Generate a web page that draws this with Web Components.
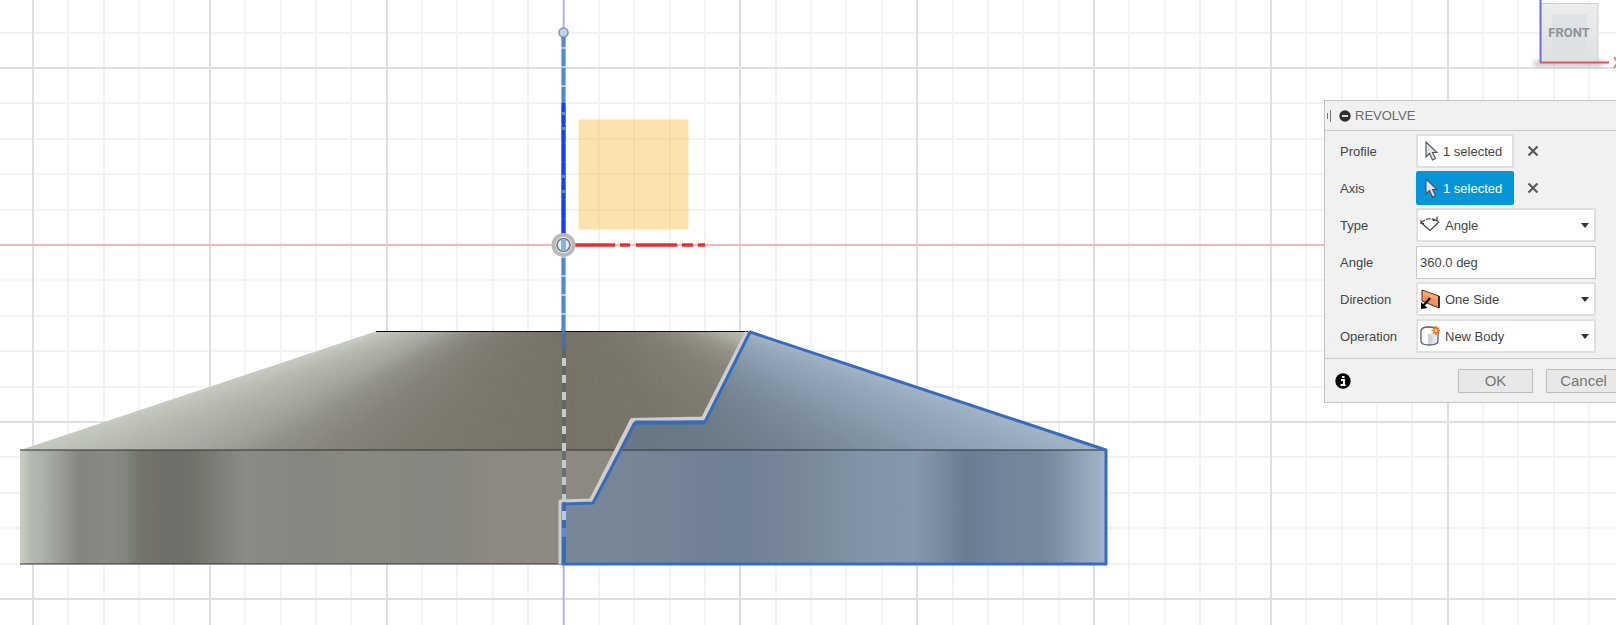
<!DOCTYPE html>
<html lang="en">
<head>
<meta charset="utf-8">
<title>Revolve</title>
<style>
  body { margin: 0; background: #fff; font-family: "Liberation Sans", Arial, sans-serif; }
</style>
</head>
<body>
<cad-workspace>
  <sketch-canvas></sketch-canvas>
  <view-cube slot="cube" face="FRONT"></view-cube>
  <command-panel slot="panel" heading="REVOLVE">
    <pick-field label="Profile" value="1 selected"></pick-field>
    <pick-field label="Axis" value="1 selected" active></pick-field>
    <choice-field label="Type" options="Angle|To|Full">
      <svg width="20" height="20" viewBox="0 0 20 20" fill="none" stroke="#3c4248" stroke-width="1.2">
        <path d="M1.500 8 10 15.500 18 8"/><path d="M1 8Q8 1 16 5.500" stroke-dasharray="5 1"/><path d="M12.500 5.500h4.500V1.500M17 5l2 3M1 5v3.500h3"/>
      </svg>
    </choice-field>
    <value-field label="Angle" value="360.0 deg"></value-field>
    <choice-field label="Direction" options="One Side|Two Sides|Symmetric">
      <svg width="20" height="20" viewBox="0 0 20 20">
        <path d="M2 1 19 7V19L2 12Z" fill="#f0905a" stroke="#5b2d10" stroke-width="1"/>
        <path d="M3 2 18 7.500V11L3 6Z" fill="#f6a872"/>
        <path d="M19 7v12" stroke="#111" stroke-width="1.500"/>
        <path d="M10 9 3 17" stroke="#000" stroke-width="2.200"/>
        <path d="M1 20V13l6.500 6Z" fill="#000"/>
      </svg>
    </choice-field>
    <choice-field label="Operation" options="New Body|Join|Cut|Intersect">
      <svg width="20" height="20" viewBox="0 0 20 20">
        <defs><linearGradient id="b"><stop stop-color="#fff"/><stop offset=".4" stop-color="#fff"/><stop offset=".45" stop-color="#c9ced6"/><stop offset="1" stop-color="#f2f4f6"/></linearGradient></defs>
        <path d="M1 5C1 2 4 1 9 1s9 1 9 4v10c0 3-4 4-9 4s-8-1-8-4Z" fill="url(#b)" stroke="#56606c" stroke-width="1.3"/>
        <ellipse cx="9" cy="5" rx="7" ry="3" fill="#fff"/>
        <path d="M16 0v9M11.500 4.500h9M13 1.500l6 6M19 1.500l-6 6" stroke="#ea7420" stroke-width="1.7"/>
        <circle cx="16" cy="4.500" r="1.300" fill="#fff0d8"/>
      </svg>
    </choice-field>
  </command-panel>
</cad-workspace>

<script>
const define = (name, html, setup) => customElements.define(name, class extends HTMLElement {
  connectedCallback() {
    if (this.shadowRoot) return;
    this.attachShadow({ mode: 'open' }).innerHTML = html;
    if (setup) setup(this, this.shadowRoot);
  }
});

define('cad-workspace', `
  <style>
    :host { display: block; position: relative; min-height: 100vh; overflow: hidden; }
    ::slotted(view-cube) { position: absolute; top: 0; right: 0; }
    ::slotted(command-panel) { position: absolute; top: 100px; right: -16px; }
  </style>
  <slot></slot><slot name="cube"></slot><slot name="panel"></slot>`);

define('sketch-canvas', `
  <style>
    :host { display: block; height: 100vh; }
    svg { display: block; width: 100%; height: 100%; }
  </style>
  <svg viewBox="0 0 1616 625" preserveAspectRatio="xMinYMin slice" role="img" aria-label="Revolved body, front view">
    <defs>
      <linearGradient id="grey" gradientUnits="userSpaceOnUse" x1="20" x2="1106" y1="0" y2="0"></linearGradient>
      <linearGradient id="blue" gradientUnits="userSpaceOnUse" x1="20" x2="1106" y1="0" y2="0"></linearGradient>
      <clipPath id="cone"><path d="M20 450 376 331H750L1106 450Z"/></clipPath>
      <clipPath id="profile"><path d="M563 564V504L593 503 635 423 705 422 750 332 1106 450V564Z"/></clipPath>
    </defs>
    <g id="grid"></g>
    <path d="M0 245H1616" stroke="#f7b6ba" stroke-width="2"/>
    <path d="M563.500 0V625" stroke="#b3a9fb" stroke-width="1.600"/>
    <path d="M20 450H1106V564H20Z" fill="url(#grey)"/>
    <g clip-path="url(#cone)" id="greyFan"></g>
    <path d="M376 331.500H748" stroke="#0c0c08" stroke-width="1"/>
    <path d="M20 450H1106M20 564H564" stroke="#33322e" stroke-width="1.200"/>
    <g clip-path="url(#profile)">
      <path d="M560 450H1106V564H560Z" fill="url(#blue)"/>
      <g id="blueFan"></g>
      <path d="M560 450H1106" stroke="#26323f" stroke-width="1.200"/>
    </g>
    <path d="M560.500 564V501.500L591 500.500 632 420 703 418.500 747 332" fill="none" stroke="#cfcecb" stroke-width="4" stroke-linejoin="round"/>
    <path d="M563 564V504L593 503 635 423 705 422 750 332 1106 450V564Z" fill="none" stroke="#376cbd" stroke-width="3" stroke-linejoin="round"/>
    <path d="M635 422.500H705" stroke="#376cbd" stroke-width="4"/>
    <path d="M564 342V520" stroke="#58646e" stroke-width="4" opacity=".75"/>
    <path d="M564 358V526" stroke="#c3cad0" stroke-width="4" stroke-dasharray="8 9"/>
    <path d="M564 503V562" stroke="#376cbd" stroke-width="4"/>
    <path d="M564 511v9" stroke="#b9c8e6" stroke-width="4"/>
    <path d="M564 528v9" stroke="#5b8ad6" stroke-width="4"/>
    <path d="M563.500 331V348" stroke="#4a6f9c" stroke-width="4"/>
    <path d="M563.500 32V331" stroke="#a9c9ee" stroke-width="4"/>
    <path d="M563.500 30V331" stroke="#5089d6" stroke-width="4" stroke-dasharray="17 2"/>
    <path d="M563.500 103V245" stroke="#1740f0" stroke-width="4"/>
    <path d="M563.500 112v3m0 12v3m0 45v3m0 12v3" stroke="#5a89d8" stroke-width="4"/>
    <path d="M572 245h43m5 0h10m6 0h41m5 0h11m5 0h7" stroke="#ea2e30" stroke-width="3.500"/>
    <rect x="578.500" y="119.500" width="110" height="110" fill="#fbb637" fill-opacity=".4"/>
    <circle cx="563.500" cy="32.500" r="4.500" fill="#b9d5ef" stroke="#8297a6" stroke-width="1.500"/>
    <circle cx="563.500" cy="245" r="10" fill="#fff" stroke="#bababa" stroke-width="4"/>
    <circle cx="563.500" cy="245" r="6.500" fill="#e3eef8" stroke="#747b80" stroke-width="1.700"/>
    <path d="M563.500 239.500v11" stroke="#82b4ea" stroke-width="5"/>
  </svg>`, (host, root) => {
  const $ = id => root.getElementById(id);
  const greyWall = [[20,'#cbd0c7'],[30,'#b5bab1'],[45,'#a9b0a7'],[60,'#9b9d96'],[80,'#83867f'],[110,'#878a82'],[125,'#82857d'],[140,'#73756d'],[165,'#6f6e68'],[190,'#706f68'],[215,'#7e7c76'],[245,'#8c8a84'],[310,'#87857f'],[370,'#898982'],[440,'#86857f'],[510,'#8d8a82'],[640,'#8d887f']];
  const blueWall = [[560,'#788898'],[640,'#758596'],[740,'#718194'],[800,'#788899'],[860,'#8193a4'],[915,'#8597ab'],[940,'#7c8c9f'],[965,'#6c7c91'],[1000,'#72839a'],[1045,'#758999'],[1075,'#8c9eb3'],[1106,'#a2b4c6']];
  for (const [id, stops] of [['grey', greyWall], ['blue', blueWall]])
    $(id).innerHTML = stops.map(([x, c]) => `<stop offset="${(x - 20) / 1086}" stop-color="${c}"/>`).join('');

  // The cone is shaded along rays that run from its apex to the base circle.
  const mix = (stops, x) => {
    let i = 1;
    while (i < stops.length - 1 && stops[i][0] < x) i++;
    const [xa, a] = stops[i - 1], [xb, b] = stops[i];
    const t = Math.min(1, Math.max(0, (x - xa) / (xb - xa)));
    const part = n => {
      const p = parseInt(a.slice(n, n + 2), 16), q = parseInt(b.slice(n, n + 2), 16);
      return Math.round(p + (q - p) * t);
    };
    return `rgb(${part(1)},${part(3)},${part(5)})`;
  };
  const fan = (stops, from, to) => {
    let out = '';
    for (let x = from; x < to; x += 3)
      out += `<path d="M563 269 ${x} 450H${Math.min(x + 6, to)}Z" fill="${mix(stops, x)}"/>`;
    return out;
  };
  $('greyFan').innerHTML = fan([[20,'#c6cbc2'],[100,'#b5b9b0'],[200,'#a5a79f'],[270,'#919087'],[330,'#86827a'],[420,'#7d796f'],[560,'#777367'],[700,'#7b776c'],[830,'#858177'],[920,'#939086'],[1000,'#a8a99d'],[1106,'#c0c2b7']], 20, 1106);
  $('blueFan').innerHTML = fan([[560,'#697785'],[700,'#6b7986'],[790,'#738391'],[860,'#7e8f9e'],[930,'#8a9cad'],[1010,'#94a7b9'],[1106,'#a3b5c7']], 560, 1106);

  let grid = '';
  const lines = major => {
    for (let k = -16; k <= 30; k++) {
      if ((k % 5 === 0) !== major) continue;
      const x = Math.round(563.5 + k * 35.37), y = Math.round(245 + k * 35.4);
      const c = major ? '#dfdfdf' : '#f3f3f3';
      if (x >= 0) grid += `<path d="M${x} 0V625" stroke="${c}" stroke-width="2"/>`;
      if (y >= 0 && y < 640) grid += `<path d="M0 ${y}H1616" stroke="${c}" stroke-width="2"/>`;
    }
  };
  lines(false);
  lines(true);
  $('grid').innerHTML = grid;
});

define('view-cube', `
  <style>
    :host { display: block; width: 92px; height: 76px; overflow: hidden; }
    svg { display: block; }
    text { font: 700 13px Roboto, sans-serif; fill: #8f949a; }
    .x { font-size: 14px; font-weight: 400; fill: #ef5a5e; }
  </style>
  <svg width="92" height="76" viewBox="0 0 92 76">
    <defs>
      <filter id="soft" x="-20%" y="-200%" width="140%" height="500%"><feGaussianBlur stdDeviation="2.500"/></filter>
      <linearGradient id="face" x2="0" y2="1"><stop stop-color="#eceded"/><stop offset="1" stop-color="#dfe0e1"/></linearGradient>
    </defs>
    <path d="M12 61H82L76 66H8Z" fill="#777" opacity=".5" filter="url(#soft)"/>
    <rect x="17" y="3.500" width="57" height="59" fill="url(#face)" stroke="#cfd0d1"/>
    <rect x="28" y="14" width="35" height="37" fill="#dcdfe3" opacity=".7"/>
    <path d="M16.500 0V63" stroke="#7468ee" stroke-width="2"/>
    <path d="M16 62.500H85" stroke="#e6565c" stroke-width="2"/>
    <text id="name" x="45" y="37" text-anchor="middle"></text>
    <text class="x" x="89" y="68">X</text>
  </svg>`, (host, root) => {
  root.getElementById('name').textContent = host.getAttribute('face');
});

define('command-panel', `
  <style>
    :host { display: block; box-sizing: border-box; width: 308px; background: #f1f1f1; border: 1px solid #c3c3c3; color: #454545; font-size: 13px; }
    header { display: flex; align-items: center; gap: 8px; height: 29px; padding-left: 2px; border-bottom: 1px solid #c9c9c9; }
    h1 { margin: 0 0 0 -4px; font-size: 13px; font-weight: 400; color: #6a6a6a; }
    .rows { display: grid; gap: 3px; padding: 3px 0 5px 15px; }
    footer { display: flex; align-items: center; gap: 13px; height: 43px; padding: 0 10px; border-top: 1px solid #c9c9c9; }
    svg { display: block; }
    .info { margin-right: auto; padding: 0; border: 0; background: none; }
    .action { width: 75px; height: 24px; padding: 0; border: 1px solid #bdbdbd; background: #e8e8e8; color: #777; font: 15px "Liberation Sans", Arial, sans-serif; }
  </style>
  <header>
    <svg width="4" height="14" viewBox="0 0 4 14"><path d="M.5 4v6M3.500 1v12" stroke="#777"/></svg>
    <svg width="12" height="12" viewBox="0 0 12 12"><circle cx="6" cy="6" r="5.700" fill="#2e2e2e"/><path d="M3 6h6" stroke="#eee" stroke-width="1.800"/></svg>
    <h1></h1>
  </header>
  <div class="rows"><slot></slot></div>
  <footer>
    <button class="info" type="button" aria-label="Information">
      <svg width="16" height="16" viewBox="0 0 16 16"><circle cx="8" cy="8" r="7.700" fill="#050505"/><path d="M6 7h3v5M5.500 12h5M7 4h2.500" fill="none" stroke="#fff" stroke-width="2"/></svg>
    </button>
    <button class="action" type="button">OK</button>
    <button class="action" type="button">Cancel</button>
  </footer>`, (host, root) => {
  root.querySelector('h1').textContent = host.getAttribute('heading');
});

const rowCss = `
  :host { display: grid; grid-template-columns: 76px 180px; align-items: center; height: 34px; }
  svg { display: block; }
  button, select, input { box-sizing: border-box; margin: 0; border: 2px solid #e0e0e0; border-radius: 2px; background: #fff; color: #454545; font: 13px "Liberation Sans", Arial, sans-serif; }`;

define('pick-field', `
  <style>${rowCss}
    .controls { display: flex; align-items: center; gap: 13px; }
    .pick { display: flex; align-items: center; gap: 5px; width: 98px; height: 34px; padding: 0 0 0 7px; }
    :host([active]) .pick { background: #0696d7; border-color: #0696d7; color: #fff; }
    .clear { padding: 0; border: 0; background: none; }
  </style>
  <label for="pick"></label>
  <div class="controls">
    <button class="pick" id="pick" type="button">
      <svg width="13" height="20" viewBox="0 0 13 20"><path d="M1 1V16L4.500 12.500 7.500 19 10.500 17.500 7.500 11.500H12Z" fill="#dfe3ea" stroke="#4b4f58" stroke-width="1.100"/></svg>
      <span></span>
    </button>
    <button class="clear" type="button" aria-label="Clear selection">
      <svg width="12" height="12" viewBox="0 0 12 12"><path d="M1.500 1.500l9 9M10.500 1.500l-9 9" stroke="#5a5a5a" stroke-width="2.200"/></svg>
    </button>
  </div>`, (host, root) => {
  root.querySelector('label').textContent = host.getAttribute('label');
  root.querySelector('span').textContent = host.getAttribute('value');
});

define('value-field', `
  <style>${rowCss}
    input { width: 180px; height: 33px; padding: 0 3px; border: 1px solid #c8c8c8; border-radius: 0; }
  </style>
  <label for="value"></label><input id="value" type="text">`, (host, root) => {
  root.querySelector('label').textContent = host.getAttribute('label');
  root.querySelector('input').value = host.getAttribute('value');
});

define('choice-field', `
  <style>${rowCss}
    .box { display: grid; align-items: center; }
    .box > * { grid-area: 1 / 1; }
    select { width: 180px; height: 34px; padding: 0 20px 0 27px; appearance: none; }
    .icon, .arrow { z-index: 1; pointer-events: none; }
    .icon { margin-left: 4px; }
    ::slotted(svg) { display: block; }
    .arrow { justify-self: end; margin-right: 7px; }
  </style>
  <label for="choice"></label>
  <div class="box">
    <select id="choice"></select>
    <div class="icon"><slot></slot></div>
    <svg class="arrow" width="8" height="5" viewBox="0 0 8 5"><path d="M0 0H8L4 5Z" fill="#333"/></svg>
  </div>`, (host, root) => {
  root.querySelector('label').textContent = host.getAttribute('label');
  for (const name of host.getAttribute('options').split('|'))
    root.querySelector('select').add(new Option(name));
});
</script>
</body>
</html>
